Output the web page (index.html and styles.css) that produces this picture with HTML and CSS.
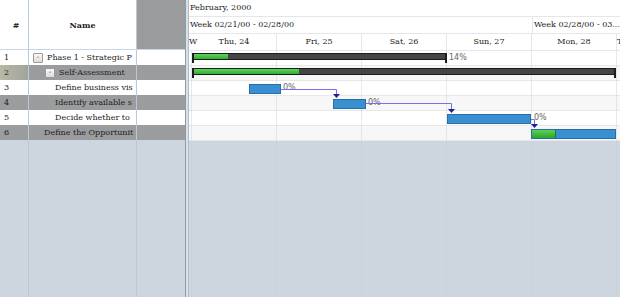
FILE: index.html
```html
<!DOCTYPE html>
<html lang="en">

<head>
    <meta charset="UTF-8">
    <meta name="viewport" content="width=device-width, initial-scale=1.0">
    <title>Gantt</title>
    <link rel="stylesheet" href="styles.css">
</head>

<body>
    <div class="gantt">
        <div class="grid">
            <div class="grid_head">
                <div class="cell num">#</div>
                <div class="cell name">Name</div>
                <div class="cell extra"></div>
            </div>
            <div class="grid_row">
                <div class="cell num">1</div>
                <div class="cell name lvl_1"><span class="toggle">-</span>Phase 1 - Strategic P</div>
                <div class="cell extra"></div>
            </div>
            <div class="grid_row even selected">
                <div class="cell num">2</div>
                <div class="cell name lvl_2"><span class="toggle">-</span>Self-Assessment</div>
                <div class="cell extra"></div>
            </div>
            <div class="grid_row">
                <div class="cell num">3</div>
                <div class="cell name lvl_3">Define business vis</div>
                <div class="cell extra"></div>
            </div>
            <div class="grid_row even">
                <div class="cell num">4</div>
                <div class="cell name lvl_3">Identify available s</div>
                <div class="cell extra"></div>
            </div>
            <div class="grid_row">
                <div class="cell num">5</div>
                <div class="cell name lvl_3">Decide whether to</div>
                <div class="cell extra"></div>
            </div>
            <div class="grid_row even">
                <div class="cell num">6</div>
                <div class="cell name lvl_3b">Define the Opportunit</div>
                <div class="cell extra"></div>
            </div>
            <div class="grid_fill">
                <div class="cell num"></div>
                <div class="cell name"></div>
                <div class="cell extra"></div>
            </div>
        </div>

        <div class="splitter"></div>

        <div class="chart">
            <div class="scale_month">February, 2000</div>
            <div class="scale_weeks">
                <div class="week first">Week 02/21/00 - 02/28/00</div>
                <div class="week">Week 02/28/00 - 03...</div>
            </div>
            <div class="scale_days">
                <div class="day edge">W</div>
                <div class="day">Thu, 24</div>
                <div class="day">Fri, 25</div>
                <div class="day">Sat, 26</div>
                <div class="day">Sun, 27</div>
                <div class="day">Mon, 28</div>
                <div class="day edge">T</div>
            </div>

            <div class="chart_body">
                <div class="lines">
                    <div></div><div></div><div></div><div></div><div></div><div></div><div></div>
                </div>

                <div class="chart_row">
                    <div class="summary" style="left:3px; width:255px"><div class="progress" style="width:35px"></div></div>
                    <span class="label" style="left:260px">14%</span>
                </div>
                <div class="chart_row even">
                    <div class="summary" style="left:3px; width:424px"><div class="progress" style="width:106px"></div></div>
                </div>
                <div class="chart_row">
                    <div class="task" style="left:60px; width:32px"></div>
                    <span class="label" style="left:94px">0%</span>
                </div>
                <div class="chart_row even">
                    <div class="task" style="left:144px; width:33px"></div>
                    <span class="label" style="left:179px">0%</span>
                </div>
                <div class="chart_row">
                    <div class="task" style="left:258px; width:84px"></div>
                    <span class="label" style="left:345px">0%</span>
                </div>
                <div class="chart_row even">
                    <div class="task" style="left:342px; width:85px"><div class="progress" style="width:23px"></div></div>
                </div>

                <svg class="links" width="431" height="90" viewBox="0 0 431 90">
                    <path d="M92 38.5 H147.5 V44" />
                    <polygon points="144,43 151,43 147.5,47" />
                    <path d="M177 52.5 H262.5 V59" />
                    <polygon points="259,58 266,58 262.5,62" />
                    <path d="M342 68.5 H345.5 V74" />
                    <polygon points="342,73 349,73 345.5,77" />
                </svg>
            </div>
        </div>
    </div>
</body>

</html>
```

FILE: styles.css
```css
body {
    padding: 0;
    margin: 0;
    background: white;
}

.gantt {
    display: flex;
    height: 297px;
    font-family: "DejaVu Serif", serif;
    font-size: 8px;
    color: #222;
    background: #cdd6df;
    overflow: hidden;
}

/* left grid */

.grid {
    display: flex;
    flex-direction: column;
    width: 185px;
}

.grid_head,
.grid_row,
.grid_fill {
    display: flex;
}

.grid_head {
    height: 50px;
    background: white;
    font-weight: bold;
    border-bottom: 1px solid #c9d6e3;
    box-sizing: border-box;
}

.grid_head .cell {
    justify-content: center;
}

.grid_head .extra {
    background: #999b9d;
}

.grid_row {
    height: 15px;
    background: white;
}

.grid_row.even {
    background: #9a9c9d;
}

.grid_fill {
    flex: 1;
}

.cell {
    display: flex;
    align-items: center;
    box-sizing: border-box;
    border-right: 1px solid #b9c9da;
    white-space: nowrap;
    overflow: hidden;
}

.num {
    width: 29px;
    padding-left: 4px;
}

.name {
    width: 108px;
}

.extra {
    width: 48px;
    border-right: none;
}

.grid_row.selected .num {
    background: linear-gradient(to right, #b9b9a6, #a2a39c);
}

.lvl_1 {
    padding-left: 4px;
}

.lvl_2 {
    padding-left: 16px;
}

.lvl_3 {
    padding-left: 26px;
}

.lvl_3b {
    padding-left: 15px;
}

.toggle {
    display: inline-flex;
    align-items: center;
    justify-content: center;
    width: 8px;
    height: 8px;
    margin-right: 4px;
    border: 1px solid #9a9a9a;
    border-radius: 1px;
    background: linear-gradient(#fafafa, #dcdcdc);
    font-family: "DejaVu Sans", sans-serif;
    font-size: 7px;
    line-height: 1;
    color: #444;
}

.splitter {
    width: 4px;
    box-sizing: border-box;
    border-left: 1px solid #8f9aa5;
    border-right: 1px solid #aebccb;
    background: #d9e1e8;
}

/* chart */

.chart {
    flex: 1;
    display: flex;
    flex-direction: column;
    min-width: 0;
}

.scale_month,
.scale_weeks,
.scale_days {
    background: white;
    border-bottom: 1px solid #e1e7ed;
    white-space: nowrap;
}

.scale_month {
    height: 16px;
    line-height: 16px;
    padding-left: 1px;
}

.scale_weeks {
    display: flex;
    height: 16px;
    line-height: 16px;
}

.week {
    padding-left: 1px;
    overflow: hidden;
}

.week.first {
    width: 342px;
    border-right: 1px solid #e1e7ed;
}

.scale_days {
    display: grid;
    grid-template-columns: 3px repeat(5, 85px) 1fr;
    height: 16px;
    line-height: 16px;
}

.day {
    text-align: center;
    border-right: 1px solid #e1e7ed;
}

.day.edge {
    text-align: left;
    border-right: none;
    overflow: visible;
}

.chart_body {
    position: relative;
    flex: 1;
}

.lines {
    position: absolute;
    inset: 0;
    display: grid;
    grid-template-columns: 3px repeat(5, 85px) 1fr;
    pointer-events: none;
    z-index: 1;
}

.lines div {
    border-right: 1px solid rgba(200, 208, 216, 0.45);
}

.lines div:last-child {
    border-right: none;
}

.chart_row {
    position: relative;
    height: 15px;
    box-sizing: border-box;
    background: white;
    border-bottom: 1px solid #e8e8e8;
}

.chart_row.even {
    background: #f7f7f7;
}

.summary,
.task,
.label {
    position: absolute;
    z-index: 2;
}

.summary {
    top: 2px;
    height: 7px;
    box-sizing: border-box;
    background: #454545;
    border: 1px solid #1c1c1c;
}

.summary::before,
.summary::after {
    content: "";
    position: absolute;
    top: 0;
    width: 2px;
    height: 9px;
    background: #1c1c1c;
}

.summary::before {
    left: -1px;
}

.summary::after {
    right: -1px;
}

.summary .progress {
    height: 100%;
    background: linear-gradient(#5fd35f, #2fae2f);
}

.task {
    top: 3px;
    height: 10px;
    box-sizing: border-box;
    background: #3990d1;
    border: 1px solid #2a6ea3;
}

.task .progress {
    height: 100%;
    background: linear-gradient(#5ad25a, #2da52d);
    border-right: 1px solid #237a23;
}

.label {
    top: 2px;
    font-family: "DejaVu Sans", sans-serif;
    font-size: 8px;
    color: #666;
}

.links {
    position: absolute;
    top: 0;
    left: 0;
    z-index: 3;
    pointer-events: none;
}

.links path {
    fill: none;
    stroke: #7872e0;
    stroke-width: 1;
}

.links polygon {
    fill: #1e1e9e;
}
```
